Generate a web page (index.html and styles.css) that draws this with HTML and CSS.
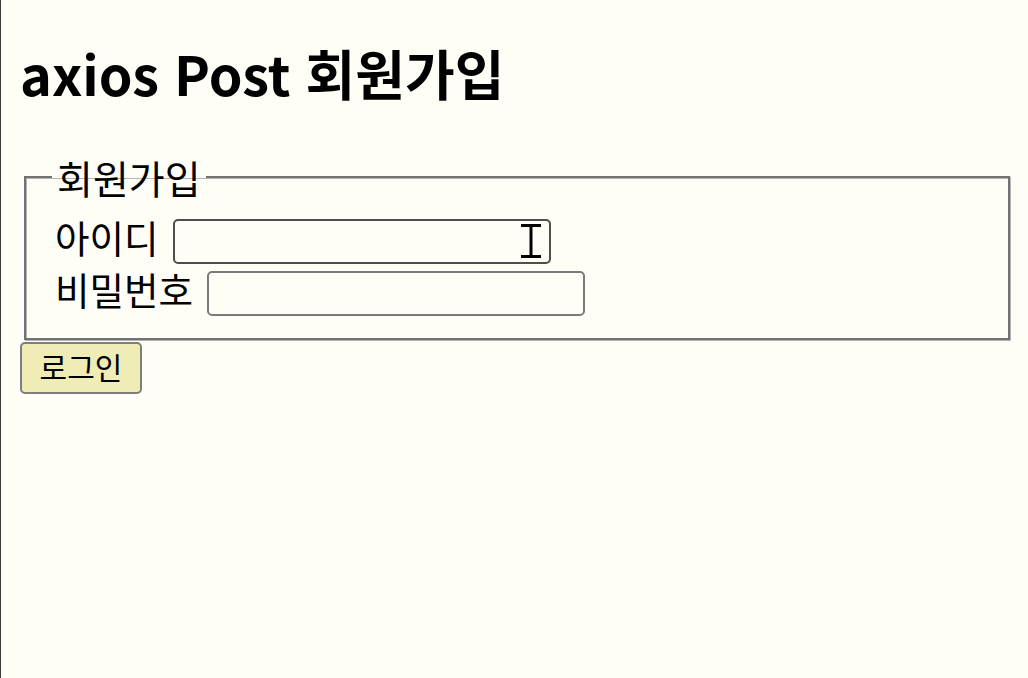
FILE: index.html
```html
<!DOCTYPE html>
<html lang="ko">
<head>
<meta charset="utf-8">
<title>axios Post 회원가입</title>
<link rel="stylesheet" href="styles.css">
</head>
<body>
<div class="page">
  <h1 class="title">axios Post 회원가입</h1>
  <form class="join-form">
    <fieldset class="join-fieldset">
      <legend class="join-legend">회원가입</legend>
      <div class="row">
        <label class="row-label" for="uid">아이디</label>
        <span class="field-wrap">
          <input class="text-input text-input--hover" id="uid" type="text">
          <svg class="ibeam" width="22" height="34" viewBox="0 0 22 34" aria-hidden="true">
            <path d="M1 1.5h20M1 32.5h20" stroke="#000" stroke-width="3" fill="none"/>
            <path d="M11 1v32" stroke="#000" stroke-width="3" fill="none"/>
          </svg>
        </span>
      </div>
      <div class="row">
        <label class="row-label" for="upw">비밀번호</label>
        <input class="text-input" id="upw" type="password">
      </div>
    </fieldset>
    <button class="submit-btn" type="button">로그인</button>
  </form>
</div>
</body>
</html>
```
FILE: styles.css
```css
html, body {
  margin: 0;
  padding: 0;
  height: 100%;
}
body {
  background: #fefef7;
  font-family: "Noto Sans CJK KR", "Noto Sans", sans-serif;
  color: #000;
}
.page {
  box-sizing: border-box;
  min-height: 100%;
  border-left: 1px solid #3a3a3a;
  padding: 0 18px 0 19px;
}
.title {
  margin: 0;
  padding-top: 40px;
  font-size: 54px;
  line-height: 66px;
  font-weight: 700;
  height: 114px;
  white-space: nowrap;
}
.join-form {
  margin: 0;
}
.join-fieldset {
  margin: 0 0 0 4px;
  padding: 0 0 19px 26px;
  border: 2px solid #727272;
  box-shadow: 1px 1px 0 #b4b4b4, inset 1px 1px 0 #b4b4b4;
}
.join-legend {
  padding: 0 5px;
  font-size: 39px;
  line-height: 46px;
}
.row {
  display: flex;
  align-items: center;
  gap: 14px;
  height: 52px;
  margin-left: 3px;
}
.row:first-of-type {
  margin-top: 15px;
}
.row-label {
  font-size: 37.5px;
  line-height: 40px;
  padding-bottom: 8px;
}
.field-wrap {
  position: relative;
  display: inline-flex;
}
.text-input {
  box-sizing: border-box;
  width: 378px;
  height: 45px;
  border: 2px solid #7a7a7a;
  border-radius: 5px;
  background: transparent;
  margin: 0;
}
.text-input--hover {
  border-color: #4e4e4e;
}
.ibeam {
  position: absolute;
  left: 347px;
  top: 5px;
}
.submit-btn {
  display: block;
  box-sizing: border-box;
  margin: 2px 0 0 0;
  width: 122px;
  height: 52px;
  border: 2px solid #7e7e7e;
  border-radius: 5px;
  background: #efecb6;
  font-family: "Noto Sans CJK KR", "Noto Sans", sans-serif;
  font-size: 30px;
  line-height: 1;
  padding: 0 0 4px 0;
  color: #000;
}
```
